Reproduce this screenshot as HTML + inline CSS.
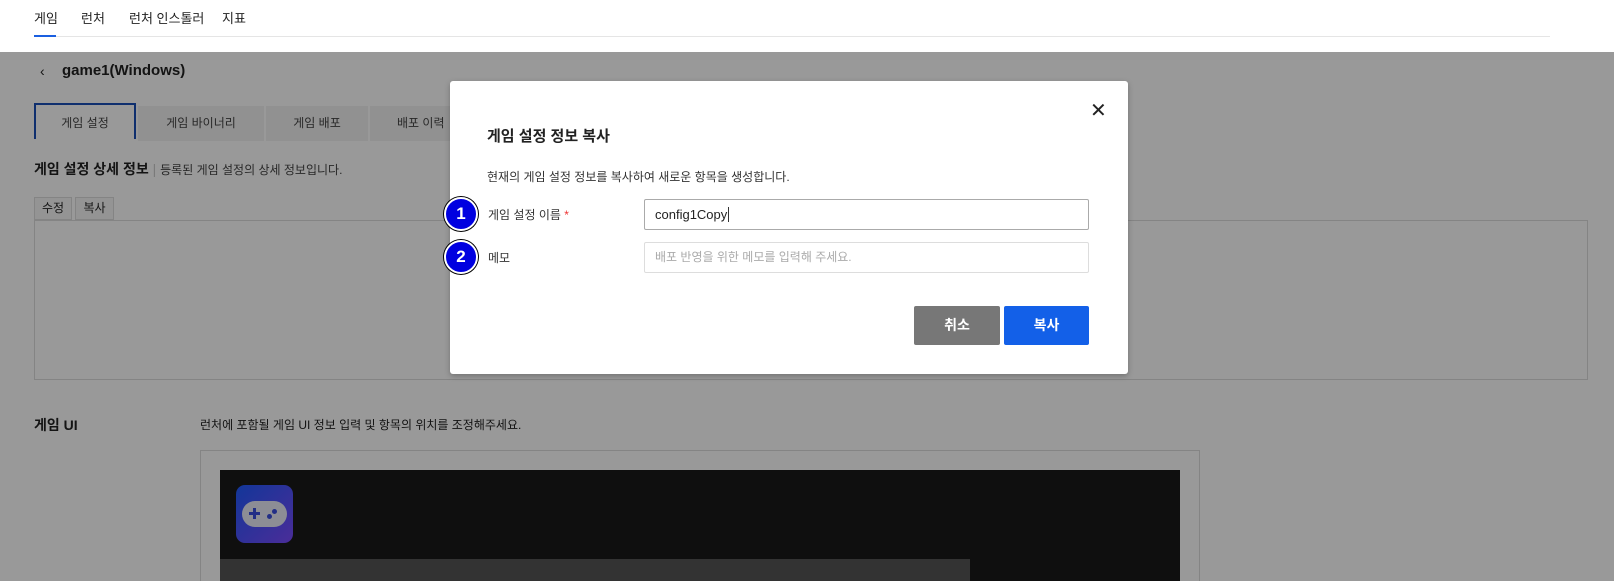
<!DOCTYPE html>
<html style="overflow:hidden;height:581px"><head><meta charset="utf-8"><style>
*{box-sizing:border-box;margin:0;padding:0}
body{width:1614px;height:581px;overflow:hidden;background:#fff;font-family:"Liberation Sans","Noto Sans CJK KR",sans-serif;color:#222;position:relative}
.a{position:absolute}
.ov{position:absolute;left:0;top:52px;width:1614px;height:529px;background:rgba(0,0,0,.4)}
</style></head><body>
<div class="a" style="left:34px;top:8px;font-size:13px">게임</div>
<div class="a" style="left:81px;top:8px;font-size:13px">런처</div>
<div class="a" style="left:129px;top:8px;font-size:13px">런처 인스톨러</div>
<div class="a" style="left:222px;top:8px;font-size:13px">지표</div>
<div class="a" style="left:34px;top:36px;width:1516px;height:1px;background:#e5e5e5"></div>
<div class="a" style="left:34px;top:35px;width:22px;height:2px;background:#1a5fe0"></div>

<div class="a" style="left:40px;top:63px;font-size:14px">‹</div>
<div class="a" style="left:62px;top:62px;font-size:15px;font-weight:bold">game1(Windows)</div>
<div class="a" style="left:34px;top:103px;width:102px;height:36px;border:2px solid #1a4fb8;border-bottom:none;font-size:12px;text-align:center;line-height:36px;color:#444">게임 설정</div>
<div class="a" style="left:138px;top:106px;width:126px;height:35px;background:#f2f2f2;font-size:12px;text-align:center;line-height:35px;color:#444">게임 바이너리</div>
<div class="a" style="left:266px;top:106px;width:102px;height:35px;background:#f2f2f2;font-size:12px;text-align:center;line-height:35px;color:#444">게임 배포</div>
<div class="a" style="left:370px;top:106px;width:100px;height:35px;background:#f2f2f2;font-size:12px;line-height:35px;color:#444;padding-left:27px">배포 이력</div>
<div class="a" style="left:34px;top:159px;font-size:14px;font-weight:bold">게임 설정 상세 정보 <span style="font-weight:normal;color:#ccc">|</span> <span style="font-size:12px;font-weight:normal;color:#444">등록된 게임 설정의 상세 정보입니다.</span></div>
<div class="a" style="left:34px;top:197px;width:38px;height:23px;border:1px solid #ddd;background:#f7f7f7;font-size:12px;text-align:center;line-height:21px">수정</div>
<div class="a" style="left:75px;top:197px;width:39px;height:23px;border:1px solid #ddd;background:#f7f7f7;font-size:12px;text-align:center;line-height:21px">복사</div>
<div class="a" style="left:34px;top:220px;width:1554px;height:160px;border:1px solid #ddd"></div>
<div class="a" style="left:34px;top:415px;font-size:14px;font-weight:bold">게임 UI</div>
<div class="a" style="left:200px;top:416px;font-size:12px">런처에 포함될 게임 UI 정보 입력 및 항목의 위치를 조정해주세요.</div>
<div class="a" style="left:200px;top:450px;width:1000px;height:131px;border:1px solid #ddd;border-bottom:none"></div>
<div class="a" style="left:220px;top:470px;width:960px;height:111px;background:#191919"></div>
<div class="a" style="left:220px;top:559px;width:750px;height:22px;background:#555"></div>
<div class="a" style="left:236px;top:485px;width:57px;height:58px;border-radius:9px;background:linear-gradient(135deg,#1f5bff,#7d4bff)">
<div class="a" style="left:6px;top:16px;width:45px;height:26px;border-radius:13px;background:#e9ecf8"></div>
<div class="a" style="left:13px;top:27px;width:11px;height:3px;background:#3a4ee0"></div>
<div class="a" style="left:17px;top:23px;width:3px;height:11px;background:#3a4ee0"></div>
<div class="a" style="left:31px;top:29px;width:5px;height:5px;border-radius:50%;background:#3a4ee0"></div>
<div class="a" style="left:36px;top:24px;width:5px;height:5px;border-radius:50%;background:#3a4ee0"></div>
</div>

<div class="ov"></div>

<div class="a" style="left:450px;top:81px;width:678px;height:293px;background:#fff;border-radius:3px;box-shadow:0 2px 6px rgba(0,0,0,.25)">
<div class="a" style="left:37px;top:44px;font-size:15px;font-weight:bold">게임 설정 정보 복사</div>
<div class="a" style="left:640px;top:17px;font-size:20px;color:#222">✕</div>
<div class="a" style="left:37px;top:87px;font-size:12px;color:#333">현재의 게임 설정 정보를 복사하여 새로운 항목을 생성합니다.</div>
<div class="a" style="left:38px;top:125px;font-size:12px;color:#333">게임 설정 이름 <span style="color:#e33">*</span></div>
<div class="a" style="left:194px;top:118px;width:445px;height:31px;border:1px solid #aaa;border-radius:2px;font-size:13px;line-height:29px;padding-left:10px">config1Copy<span style="border-left:1px solid #333;margin-left:1px"></span></div>
<div class="a" style="left:38px;top:168px;font-size:12px;color:#333">메모</div>
<div class="a" style="left:194px;top:161px;width:445px;height:31px;border:1px solid #ddd;border-radius:2px;font-size:12px;line-height:29px;padding-left:10px;color:#aaa">배포 반영을 위한 메모를 입력해 주세요.</div>
<div class="a" style="left:464px;top:225px;width:86px;height:39px;background:#777;border-radius:2px;color:#fff;font-size:14px;font-weight:bold;text-align:center;line-height:39px">취소</div>
<div class="a" style="left:554px;top:225px;width:85px;height:39px;background:#1360e8;border-radius:2px;color:#fff;font-size:14px;font-weight:bold;text-align:center;line-height:39px">복사</div>
</div>

<div class="a" style="left:444px;top:197px;width:34px;height:34px;border-radius:50%;background:#0000e0;border:2px solid #fff;box-shadow:0 0 0 1px #000;color:#fff;font-weight:bold;font-size:17px;text-align:center;line-height:30px">1</div>
<div class="a" style="left:444px;top:240px;width:34px;height:34px;border-radius:50%;background:#0000e0;border:2px solid #fff;box-shadow:0 0 0 1px #000;color:#fff;font-weight:bold;font-size:17px;text-align:center;line-height:30px">2</div>
</body></html>
